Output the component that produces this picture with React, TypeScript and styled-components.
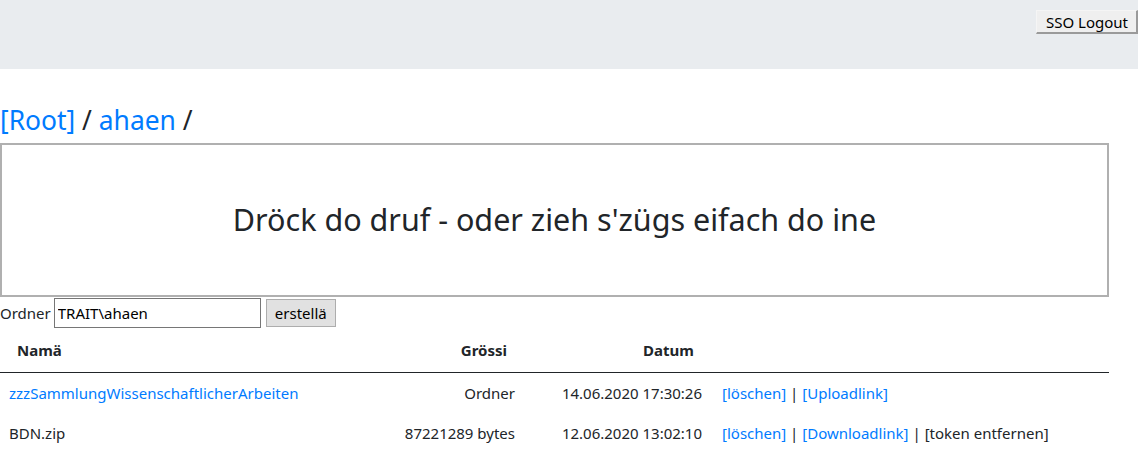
import styled, { createGlobalStyle } from "styled-components";

const GlobalStyle = createGlobalStyle`
  body {
    margin: 0;
    font-family: "Noto Sans", "Open Sans", sans-serif;
    color: #212529;
    background: #ffffff;
  }
`;

interface Entry {
  name: string;
  isFolder: boolean;
  size: string;
  date: string;
  actions: { label: string; link: boolean }[];
}

const entries: Entry[] = [
  {
    name: "zzzSammlungWissenschaftlicherArbeiten",
    isFolder: true,
    size: "Ordner",
    date: "14.06.2020 17:30:26",
    actions: [
      { label: "[löschen]", link: true },
      { label: "[Uploadlink]", link: true },
    ],
  },
  {
    name: "BDN.zip",
    isFolder: false,
    size: "87221289 bytes",
    date: "12.06.2020 13:02:10",
    actions: [
      { label: "[löschen]", link: true },
      { label: "[Downloadlink]", link: true },
      { label: "[token entfernen]", link: false },
    ],
  },
];

export default function App() {
  return (
    <>
      <GlobalStyle />
      <TopBar>
        <LogoutButton>SSO Logout</LogoutButton>
      </TopBar>
      <Main>
        <Crumbs>
          <Link href="#">[Root]</Link> / <Link href="#">ahaen</Link> /
        </Crumbs>
        <DropZone>Dröck do druf - oder zieh s'zügs eifach do ine</DropZone>
        <FolderForm>
          <span>Ordner</span>
          <FolderInput defaultValue="TRAIT\ahaen" />
          <CreateButton>erstellä</CreateButton>
        </FolderForm>
        <Table>
          <colgroup>
            <col style={{ width: 390 }} />
            <col style={{ width: 125 }} />
            <col style={{ width: 197 }} />
            <col />
          </colgroup>
          <thead>
            <tr>
              <Th $align="left" $pad="0 0 0 17px">Namä</Th>
              <Th $align="right" $pad="0 8px 0 0">Grössi</Th>
              <Th $align="center" $pad="0 0 0 110px">Datum</Th>
              <Th $align="left" $pad="0" />
            </tr>
          </thead>
          <tbody>
            {entries.map((e) => (
              <tr key={e.name}>
                <NameCell>
                  {e.isFolder ? <Link href="#">{e.name}</Link> : e.name}
                </NameCell>
                <SizeCell>{e.size}</SizeCell>
                <DateCell>{e.date}</DateCell>
                <ActionCell>
                  {e.actions.map((a, i) => (
                    <span key={a.label}>
                      {i > 0 && " | "}
                      {a.link ? <Link href="#">{a.label}</Link> : a.label}
                    </span>
                  ))}
                </ActionCell>
              </tr>
            ))}
          </tbody>
        </Table>
      </Main>
    </>
  );
}

const TopBar = styled.header`
  height: 69px;
  background: #e9ecef;
  display: flex;
  justify-content: flex-end;
  align-items: flex-start;
  padding-top: 10px;
  box-sizing: border-box;
`;

const LogoutButton = styled.button`
  height: 24px;
  padding: 0 8px 0 9px;
  font-family: inherit;
  font-size: 15px;
  color: #000;
  background: #efefef;
  border: none;
  border-right: 2px solid #9a9a9a;
  border-bottom: 2px solid #9a9a9a;
  border-top: 1px solid #f5f5f5;
  border-left: 1px solid #f5f5f5;
`;

const Main = styled.main`
  padding-top: 31px;
  width: 1109px;
`;

const Link = styled.a`
  color: #007bff;
  text-decoration: none;
`;

const Crumbs = styled.div`
  font-size: 26.4px;
  line-height: 40px;
  margin-bottom: 3px;
  color: #212529;
`;

const DropZone = styled.div`
  height: 154px;
  box-sizing: border-box;
  border: 2px solid #b0b0b0;
  display: flex;
  align-items: center;
  justify-content: center;
  font-size: 30.5px;
  color: #212529;
  padding-bottom: 2px;
`;

const FolderForm = styled.div`
  display: flex;
  align-items: center;
  gap: 3px;
  height: 31px;
  font-size: 15px;
  color: #212529;
`;

const FolderInput = styled.input`
  width: 207px;
  height: 30px;
  box-sizing: border-box;
  border: 1px solid #767676;
  padding: 0 3px;
  font-family: inherit;
  font-size: 15px;
  color: #000;
`;

const CreateButton = styled.button`
  margin-left: 2px;
  width: 70px;
  height: 28px;
  box-sizing: border-box;
  background: #e1e1e1;
  border: 1px solid #adadad;
  font-family: inherit;
  font-size: 15px;
  color: #000;
  padding: 0;
`;

const Table = styled.table`
  width: 1109px;
  border-collapse: collapse;
  font-size: 15px;
  table-layout: fixed;
`;

const Th = styled.th<{ $align: string; $pad: string }>`
  box-sizing: border-box;
  height: 44px;
  text-align: ${(p) => p.$align};
  padding: ${(p) => p.$pad};
  border-bottom: 1px solid #212529;
  font-weight: 700;
  vertical-align: middle;
`;

const NameCell = styled.td`
  height: 40px;
  padding: 0 0 0 9px;
`;

const SizeCell = styled.td`
  text-align: right;
  padding: 0;
`;

const DateCell = styled.td`
  text-align: right;
  padding: 0 10px 0 0;
`;

const ActionCell = styled.td`
  padding: 0 0 0 10px;
  white-space: nowrap;
`;
